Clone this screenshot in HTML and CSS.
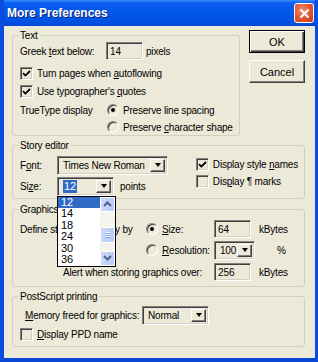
FILE: index.html
```html
<!DOCTYPE html>
<html lang="en">
<head>
    <meta charset="UTF-8">
    <meta name="viewport" content="width=device-width, initial-scale=1.0">
    <title>More Preferences</title>
    <link rel="stylesheet" href="styles.css">
</head>
<body>

    <div class="window">
        <div class="titlebar">
            <span class="title">More Preferences</span>
            <span class="close">
                <svg width="11" height="11" viewBox="0 0 11 11"><path d="M1.5 1.5l8 8M9.5 1.5l-8 8" stroke="#fff" stroke-width="2.2" fill="none"/></svg>
            </span>
        </div>

        <div class="client">
            <div class="top">
                <!-- Text options -->
                <fieldset class="group text-group">
                    <legend>Text</legend>
                    <div class="row greek">
                        <span class="lbl greek-lbl">Greek <u>t</u>ext below:</span>
                        <span class="field w37">14</span>
                        <span class="unit pixels">pixels</span>
                    </div>
                    <div class="row r-auto">
                        <span class="check"><svg width="9" height="9" viewBox="0 0 9 9"><path d="M1 4.2l2.4 2.4L8 2" stroke="#000" stroke-width="1.8" fill="none"/></svg></span>
                        <span>Turn pages when <u>a</u>utoflowing</span>
                    </div>
                    <div class="row r-quotes">
                        <span class="check"><svg width="9" height="9" viewBox="0 0 9 9"><path d="M1 4.2l2.4 2.4L8 2" stroke="#000" stroke-width="1.8" fill="none"/></svg></span>
                        <span>Use typographer's <u>q</u>uotes</span>
                    </div>
                    <div class="row r-truetype">
                        <span class="lbl tt-lbl">TrueType display</span>
                        <span class="radio on"></span>
                        <span>Preserve line spacing</span>
                    </div>
                    <div class="row r-shape">
                        <span class="radio"></span>
                        <span>Preserve <u>c</u>haracter shape</span>
                    </div>
                </fieldset>

                <div class="buttons">
                    <button class="btn default">OK</button>
                    <button class="btn">Cancel</button>
                </div>
            </div>

            <!-- Story editor -->
            <fieldset class="group story">
                <legend>Story editor</legend>
                <div class="story-body">
                    <div class="story-left">
                        <div class="row r-font">
                            <span class="lbl story-lbl">F<u>o</u>nt:</span>
                            <span class="combo w-font">
                                <span class="combo-text">Times New Roman</span>
                                <span class="combo-btn"></span>
                            </span>
                        </div>
                        <div class="row r-size">
                            <span class="lbl story-lbl">Si<u>z</u>e:</span>
                            <span class="combo w-size">
                                <span class="combo-text"><span class="hl">12</span></span>
                                <span class="combo-btn"></span>
                                <div class="droplist">
                                    <ul class="items">
                                        <li class="sel">12</li>
                                        <li>14</li>
                                        <li>18</li>
                                        <li>24</li>
                                        <li>30</li>
                                        <li>36</li>
                                    </ul>
                                    <div class="scrollbar">
                                        <span class="sb-btn"><svg width="9" height="6" viewBox="0 0 9 6"><path d="M1 5l3.5-3.5L8 5" stroke="#4d6185" stroke-width="2" fill="none"/></svg></span>
                                        <span class="sb-track"><span class="sb-thumb"><i></i><i></i><i></i></span></span>
                                        <span class="sb-btn"><svg width="9" height="6" viewBox="0 0 9 6"><path d="M1 1l3.5 3.5L8 1" stroke="#4d6185" stroke-width="2" fill="none"/></svg></span>
                                    </div>
                                </div>
                            </span>
                            <span class="unit points">points</span>
                        </div>
                    </div>
                    <div class="story-right">
                        <div class="row r-names">
                            <span class="check"><svg width="9" height="9" viewBox="0 0 9 9"><path d="M1 4.2l2.4 2.4L8 2" stroke="#000" stroke-width="1.8" fill="none"/></svg></span>
                            <span>Display style <u>n</u>ames</span>
                        </div>
                        <div class="row r-marks">
                            <span class="check"></span>
                            <span>Dis<u>p</u>lay ¶ marks</span>
                        </div>
                    </div>
                </div>
            </fieldset>

            <!-- Graphics -->
            <fieldset class="group graphics">
                <legend>Graphics</legend>
                <div class="row g-size">
                    <span class="lbl define-lbl">Define standard display by</span>
                    <span class="radio on"></span>
                    <span class="opt-lbl"><u>S</u>ize:</span>
                    <span class="field w37">64</span>
                    <span class="unit kb">kBytes</span>
                </div>
                <div class="row g-res">
                    <span class="radio"></span>
                    <span class="opt-lbl"><u>R</u>esolution:</span>
                    <span class="combo w-res">
                        <span class="combo-text">100</span>
                        <span class="combo-btn"></span>
                    </span>
                    <span class="unit pct">%</span>
                </div>
                <div class="row g-alert">
                    <span class="lbl alert-lbl">Alert when storing graphics over:</span>
                    <span class="field w37">256</span>
                    <span class="unit kb">kBytes</span>
                </div>
            </fieldset>

            <!-- PostScript printing -->
            <fieldset class="group postscript">
                <legend>PostScript printing</legend>
                <div class="row p-memory">
                    <span class="lbl memory-lbl"><u>M</u>emory freed for graphics:</span>
                    <span class="combo w-mem">
                        <span class="combo-text">Normal</span>
                        <span class="combo-btn"></span>
                    </span>
                </div>
                <div class="row p-ppd">
                    <span class="check"></span>
                    <span><u>D</u>isplay PPD name</span>
                </div>
            </fieldset>
        </div>
    </div>

</body>
</html>
```

FILE: styles.css
```css
* {
    box-sizing: border-box;
}

body {
    margin: 0;
    font-family: "Liberation Sans", Arial, sans-serif;
    font-size: 10px;
    line-height: 13px;
    letter-spacing: -0.2px;
    color: #000;
    background: #ece9d8;
}

u {
    text-decoration: underline;
    text-underline-offset: 1px;
}

/* Window frame */
.window {
    width: 318px;
    height: 362px;
    display: flex;
    flex-direction: column;
    background: #ece9d8;
    border-left: 4px solid #0a4cdf;
    border-right: 3px solid #0a4cdf;
    border-bottom: 4px solid #0a46d6;
}

.titlebar {
    height: 26px;
    flex: none;
    display: flex;
    align-items: center;
    justify-content: space-between;
    padding: 0 1px 0 3px;
    background: linear-gradient(#3a8cf9 0, #0a5ff0 3px, #0058e8 45%, #0052e2 85%, #0046d4 100%);
}

.title {
    color: #fff;
    font-size: 12px;
    font-weight: bold;
    letter-spacing: 0;
    text-shadow: 1px 1px #0a1e7c;
}

.close {
    width: 20px;
    height: 20px;
    display: flex;
    align-items: center;
    justify-content: center;
    border: 1px solid #fff;
    border-radius: 3px;
    background: radial-gradient(circle at 40% 35%, #ef8a6c 0, #e0532f 55%, #c63a18 100%);
}

.client {
    flex: 1;
    display: flex;
    flex-direction: column;
    padding: 3px 10px 0 8px;
}

.top {
    display: flex;
    gap: 9px;
}

/* Group boxes */
.group {
    margin: 0;
    min-width: 0;
    padding: 0 6px 0 7px;
    border: 1px solid #d0d0bf;
    border-radius: 3px;
}

.group legend {
    padding: 0 2px;
    margin-left: -2px;
    line-height: 13px;
}

.row {
    display: flex;
    align-items: center;
    height: 16px;
    white-space: nowrap;
}

.text-group {
    width: 228px;
    height: 107px;
}

.greek {
    height: 18px;
}

.greek-lbl {
    width: 86px;
}

.pixels {
    margin-left: 3px;
}

.r-auto {
    margin-top: 5px;
}

.r-quotes {
    margin-top: 2px;
}

.r-truetype {
    margin-top: 3px;
}

.tt-lbl {
    width: 87px;
}

.r-shape {
    margin-top: 1px;
    padding-left: 87px;
}

.check + span,
.radio + span {
    margin-left: 4px;
}

.buttons {
    display: flex;
    flex-direction: column;
    gap: 7px;
    margin-top: 1px;
}

.btn {
    width: 56px;
    height: 23px;
    padding: 0;
    font-family: "Liberation Sans", Arial, sans-serif;
    font-size: 11px;
    color: #000;
    background: #ece9d8;
    border: 1px solid;
    border-color: #fff #404040 #404040 #fff;
    box-shadow: inset -1px -1px #808080;
}

.btn.default {
    border-color: #000;
    box-shadow: inset 1px 1px #fff, inset -1px -1px #404040, inset -2px -2px #808080;
}

/* Controls */
.check {
    width: 13px;
    height: 13px;
    flex: none;
    display: flex;
    align-items: center;
    justify-content: center;
    border: 1px solid;
    border-color: #808080 #fff #fff #808080;
    box-shadow: inset 1px 1px #404040, inset -1px -1px #d4d0c8;
    background: #ece9d8;
}

.radio {
    width: 12px;
    height: 12px;
    flex: none;
    display: flex;
    align-items: center;
    justify-content: center;
    border-radius: 50%;
    border: 1px solid;
    border-color: #808080 #fff #fff #808080;
    box-shadow: inset 1px 1px #404040;
    background: #ece9d8;
}

.radio.on::after {
    content: "";
    width: 4px;
    height: 4px;
    border-radius: 50%;
    background: #000;
}

.field {
    height: 18px;
    flex: none;
    padding: 0 3px;
    display: flex;
    align-items: center;
    font-size: 10px;
    letter-spacing: 0;
    border: 1px solid;
    border-color: #808080 #fff #fff #808080;
    box-shadow: inset 1px 1px #404040, inset -1px -1px #d4d0c8;
    background: #ece9d8;
}

.w37 {
    width: 37px;
}

.combo {
    position: relative;
    height: 19px;
    flex: none;
    display: flex;
    align-items: stretch;
    padding: 2px;
    border: 1px solid;
    border-color: #808080 #fff #fff #808080;
    box-shadow: inset 1px 1px #404040, inset -1px -1px #d4d0c8;
    background: #ece9d8;
}

.combo-text {
    flex: 1;
    display: flex;
    align-items: center;
    padding-left: 3px;
    font-size: 10px;
    overflow: hidden;
}

.combo-btn {
    width: 15px;
    flex: none;
    display: flex;
    align-items: center;
    justify-content: center;
    background: #ece9d8;
    border: 1px solid;
    border-color: #fff #404040 #404040 #fff;
    box-shadow: inset -1px -1px #808080;
}

.combo-btn::after {
    content: "";
    border-left: 3.5px solid transparent;
    border-right: 3.5px solid transparent;
    border-top: 4px solid #000;
}

.hl {
    padding: 0 1px;
    font-size: 11px;
    letter-spacing: 0;
    color: #fff;
    background: #316ac5;
}

.w-font {
    width: 111px;
}

.w-size {
    width: 57px;
}

.w-res {
    width: 41px;
}

.w-mem {
    width: 67px;
}

/* Story editor */
.story {
    margin-top: 3px;
    padding-bottom: 2px;
}

.story-body {
    display: flex;
}

.story-left {
    width: 178px;
}

.story-lbl {
    width: 37px;
}

.r-font {
    height: 20px;
    margin-top: 3px;
}

.r-size {
    height: 20px;
    margin-top: 1px;
}

.points {
    margin-left: 6px;
}

.r-names {
    margin-top: 4px;
}

.r-marks {
    margin-top: 1px;
}

/* Open size list */
.droplist {
    position: absolute;
    left: -1px;
    top: 18px;
    z-index: 5;
    width: 59px;
    display: flex;
    border: 1px solid #000;
    background: #fff;
}

.items {
    flex: 1;
    margin: 0;
    padding: 0;
    list-style: none;
    font-size: 11px;
    letter-spacing: 0;
}

.items li {
    height: 11.5px;
    line-height: 11.5px;
    padding-left: 3px;
}

.items li.sel {
    color: #fff;
    background: #316ac5;
}

.scrollbar {
    width: 15px;
    display: flex;
    flex-direction: column;
    background: #f4f3ee;
}

.sb-btn,
.sb-thumb {
    display: flex;
    align-items: center;
    justify-content: center;
    border: 1px solid #fff;
    border-radius: 2px;
    background: linear-gradient(to right, #cad8fb, #b8cbf5);
}

.sb-btn {
    height: 15px;
}

.sb-track {
    flex: 1;
    padding-top: 15px;
}

.sb-thumb {
    height: 16px;
    flex-direction: column;
    gap: 1px;
}

.sb-thumb i {
    width: 6px;
    height: 1px;
    background: #eef3fe;
    box-shadow: 0 1px #8caae6;
}

/* Graphics */
.graphics {
    margin-top: 4px;
    padding-bottom: 5px;
}

.g-size {
    height: 18px;
    margin-top: 4px;
}

.define-lbl {
    width: 126px;
}

.opt-lbl {
    width: 52px;
}

.kb {
    margin-left: 8px;
}

.g-res {
    height: 20px;
    margin-top: 2px;
    padding-left: 126px;
}

.pct {
    margin-left: 22px;
}

.g-alert {
    height: 18px;
    margin-top: 3px;
}

.alert-lbl {
    width: 194px;
    padding-left: 43px;
}

/* PostScript printing */
.postscript {
    margin-top: 3px;
    padding-bottom: 4px;
}

.p-memory {
    height: 20px;
    margin-top: 2px;
}

.memory-lbl {
    width: 122px;
    padding-left: 5px;
}

.p-ppd {
    margin-top: 1px;
}
```
